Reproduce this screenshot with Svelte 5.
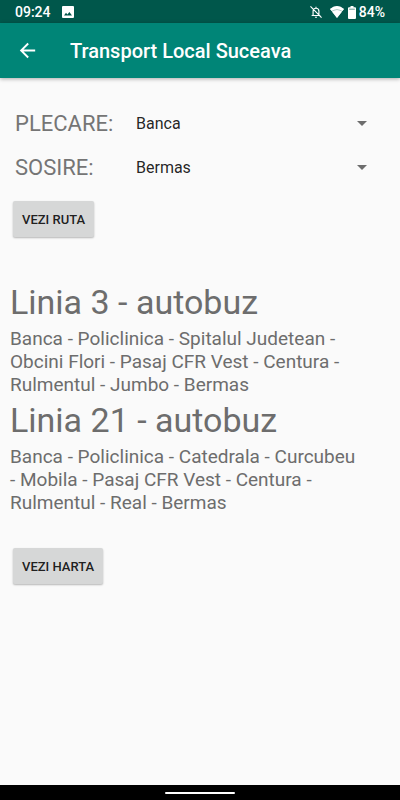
<script lang="ts">
	type Line = {
		name: string;
		stops: string[];
	};

	const stations = [
		'Banca',
		'Bermas',
		'Catedrala',
		'Centura',
		'Curcubeu',
		'Jumbo',
		'Mobila',
		'Obcini Flori',
		'Pasaj CFR Vest',
		'Policlinica',
		'Real',
		'Rulmentul',
		'Spitalul Judetean'
	];

	const lines: Line[] = [
		{
			name: 'Linia 3 - autobuz',
			stops: [
				'Banca',
				'Policlinica',
				'Spitalul Judetean',
				'Obcini Flori',
				'Pasaj CFR Vest',
				'Centura',
				'Rulmentul',
				'Jumbo',
				'Bermas'
			]
		},
		{
			name: 'Linia 21 - autobuz',
			stops: [
				'Banca',
				'Policlinica',
				'Catedrala',
				'Curcubeu',
				'Mobila',
				'Pasaj CFR Vest',
				'Centura',
				'Rulmentul',
				'Real',
				'Bermas'
			]
		}
	];

	let departure = $state('Banca');
	let arrival = $state('Bermas');
	let results = $state(lines);

	function findRoute(event: SubmitEvent) {
		event.preventDefault();
		results = lines.filter(
			(line) => line.stops.includes(departure) && line.stops.includes(arrival)
		);
	}
</script>

<div class="screen">
	<div class="status-bar">
		<span>09:24</span>
		<svg class="picture" width="12" height="12" viewBox="0 0 12 12" aria-hidden="true">
			<path
				fill="#fff"
				fill-rule="evenodd"
				d="M1 0h10a1 1 0 0 1 1 1v10a1 1 0 0 1-1 1H1a1 1 0 0 1-1-1V1a1 1 0 0 1 1-1zM2 9.5h8L7.4 6 5.4 8.5 4 6.8z"
			/>
		</svg>
		<div class="status-icons">
			<svg width="14" height="14" viewBox="0 0 24 24" aria-hidden="true">
				<path
					fill="none"
					stroke="#fff"
					stroke-width="2"
					d="M7 18v-7.500a5 5 0 0 1 10 0V18M4.500 18h15M12 3v3M2.500 2.500l19 19"
				/>
				<path fill="#fff" d="M10 20h4a2 2 0 0 1-4 0z" />
			</svg>
			<svg class="wifi" width="14" height="12" viewBox="0 0 14 12" aria-hidden="true">
				<path fill="#fff" fill-opacity="0.6" d="M0 3Q7-3 14 3L7 12z" />
				<path fill="#fff" d="M0 3Q7-3 14 3L12.400 5Q7 1.500 1.600 5zM1.900 5.400Q7 2.400 12.100 5.400L7 12z" />
			</svg>
			<svg class="battery" width="8" height="13" viewBox="0 0 8 13" aria-hidden="true">
				<path fill="#fff" d="M2.500 0h3v1.300H7a1 1 0 0 1 1 1V12a1 1 0 0 1-1 1H1a1 1 0 0 1-1-1V2.300a1 1 0 0 1 1-1h1.500z" />
				<path fill="#00574b" fill-opacity="0.6" d="M1.200 2.700h5.600v1H1.200z" />
			</svg>
			<span>84%</span>
		</div>
	</div>

	<header class="app-bar">
		<button type="button" class="back-btn" aria-label="Înapoi">
			<svg viewBox="0 0 24 24" aria-hidden="true">
				<path fill="#fff" d="M20 11H7.830l5.590-5.590L12 4l-8 8 8 8 1.410-1.410L7.830 13H20v-2z" />
			</svg>
		</button>
		<h1>Transport Local Suceava</h1>
	</header>

	<main>
		<form onsubmit={findRoute}>
			<div class="field">
				<label for="departure">PLECARE:</label>
				<div class="spinner">
					<select id="departure" bind:value={departure}>
						{#each stations as station}
							<option value={station}>{station}</option>
						{/each}
					</select>
					<svg width="10" height="5" viewBox="0 0 10 5" aria-hidden="true">
						<path fill="#6d6d6d" d="M0 0h10L5 5z" />
					</svg>
				</div>
			</div>
			<div class="field">
				<label for="arrival">SOSIRE:</label>
				<div class="spinner">
					<select id="arrival" bind:value={arrival}>
						{#each stations as station}
							<option value={station}>{station}</option>
						{/each}
					</select>
					<svg width="10" height="5" viewBox="0 0 10 5" aria-hidden="true">
						<path fill="#6d6d6d" d="M0 0h10L5 5z" />
					</svg>
				</div>
			</div>
			<button type="submit" class="action-btn">VEZI RUTA</button>
		</form>

		<section class="results">
			{#each results as line}
				<h2>{line.name}</h2>
				<p>{line.stops.join(' - ')}</p>
			{/each}
		</section>

		<button type="button" class="action-btn">VEZI HARTA</button>
	</main>

	<div class="nav-bar">
		<span class="handle"></span>
	</div>
</div>

<style>
	:global(body) {
		margin: 0;
		background: #fafafa;
	}

	.screen {
		display: flex;
		flex-direction: column;
		min-height: 100vh;
		background: #fafafa;
		font-family: Roboto, 'Liberation Sans', sans-serif;
	}

	/* System status bar */
	.status-bar {
		display: flex;
		align-items: center;
		height: 23px;
		padding: 1px 15px 0;
		box-sizing: border-box;
		background: #00574b;
		color: #fff;
		font-size: 14px;
		font-weight: 500;
	}

	.picture {
		margin-left: 11px;
	}

	.status-icons {
		display: flex;
		align-items: center;
		margin-left: auto;
	}

	.wifi {
		margin-left: 7px;
	}

	.battery {
		margin: 0 3px 0 4px;
	}

	/* Toolbar */
	.app-bar {
		display: flex;
		align-items: center;
		height: 55px;
		padding: 0 16px;
		box-sizing: border-box;
		background: #008577;
		color: #fff;
		box-shadow: 0 1px 4px #00000052;
	}

	.back-btn {
		display: flex;
		padding: 0;
		border: 0;
		background: none;
		cursor: pointer;
	}

	.back-btn svg {
		width: 23px;
		height: 23px;
	}

	h1 {
		margin: 0 0 0 31px;
		font-size: 20px;
		font-weight: 500;
		line-height: 24px;
	}

	/* Content */
	main {
		flex: 1;
		padding: 23px 10px;
	}

	.field {
		display: flex;
		align-items: center;
		height: 44px;
		padding-left: 5px;
	}

	.field label {
		width: 113px;
		color: #757575;
		font-size: 22px;
	}

	.spinner {
		display: flex;
		flex: 1;
		align-items: center;
		padding-right: 23px;
	}

	.spinner select {
		flex: 1;
		min-width: 0;
		height: 40px;
		margin-right: -10px;
		padding: 0 10px 0 8px;
		border: 0;
		appearance: none;
		background: transparent;
		color: #000000de;
		font-family: inherit;
		font-size: 16px;
	}

	.spinner svg {
		pointer-events: none;
	}

	.action-btn {
		display: block;
		height: 36px;
		margin: 12px 3px 0;
		padding: 0 9px;
		border: 0;
		border-radius: 2px;
		background: #d6d7d7;
		box-shadow: 0 1px 2px #00000047;
		color: #000000de;
		font-family: inherit;
		font-size: 13px;
		font-weight: 500;
		cursor: pointer;
	}

	/* Route list */
	.results {
		padding: 41px 28px 22px 0;
		color: #6d6d6d;
	}

	.results h2 {
		margin: 0;
		font-size: 34px;
		font-weight: 400;
		line-height: 49px;
	}

	.results p {
		margin: 0;
		font-size: 19px;
		line-height: 23px;
	}

	/* Gesture navigation */
	.nav-bar {
		display: flex;
		align-items: center;
		justify-content: center;
		height: 15px;
		background: #000;
	}

	.handle {
		width: 70px;
		height: 2px;
		border-radius: 1px;
		background: #fff;
	}
</style>
